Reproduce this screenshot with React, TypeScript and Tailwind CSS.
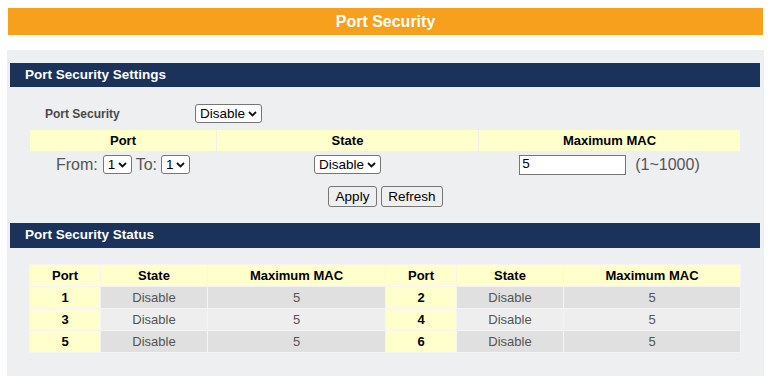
import React from "react";

const Chevron = () => (
  <svg
    className="pointer-events-none absolute right-[5px] top-1/2 -translate-y-1/2"
    width="9"
    height="6"
    viewBox="0 0 9 6"
  >
    <polyline points="1,1 4.5,4.5 8,1" fill="none" stroke="#111" strokeWidth="1.8" />
  </svg>
);

function Sel({ value, w }: { value: string; w: string }) {
  return (
    <span className={`relative inline-flex h-[19px] ${w}`}>
      <select
        defaultValue={value}
        className="h-full w-full appearance-none rounded-[3px] border border-[#767676] bg-white pl-[4px] text-[13.5px] leading-none text-black outline-none"
      >
        <option>{value}</option>
      </select>
      <Chevron />
    </span>
  );
}

const Btn = ({ label, w }: { label: string; w: string }) => (
  <button
    className={`h-[21px] ${w} rounded-[3px] border border-[#767676] bg-[#efefef] text-[13.5px] leading-none text-black`}
  >
    {label}
  </button>
);

const rows = [
  [1, 2],
  [3, 4],
  [5, 6],
];

export default function App() {
  return (
    <div
      className="min-h-[389px] w-[773px] bg-white pt-[8px]"
      style={{ fontFamily: '"Liberation Sans", Arial, sans-serif' }}
    >
      <div className="ml-[8px] flex h-[27px] w-[755px] items-center justify-center bg-[#f7a01d] text-[16px] font-bold text-white">
        Port Security
      </div>

      <div className="ml-[7px] mt-[15px] w-[757px] bg-[#eeeff1] pb-[23px] pt-[13px]">
        <div className="ml-[3px] flex h-[24px] w-[750px] items-center bg-[#1b325b] pl-[15px] text-[13.5px] font-bold text-white">
          Port Security Settings
        </div>

        <div className="mt-[17px] flex h-[19px] items-center">
          <span className="ml-[38px] w-[150px] text-[12px] font-bold text-[#4a4a4a]">Port Security</span>
          <Sel value="Disable" w="w-[67px]" />
        </div>

        <table className="ml-[22px] mt-[6px] w-[712px] border-separate border-spacing-px text-[13px]">
          <tbody>
            <tr className="h-[21px] bg-[#ffffcc] font-bold text-black">
              <td className="w-[186px] text-center">Port</td>
              <td className="w-[261px] text-center">State</td>
              <td className="text-center">Maximum MAC</td>
            </tr>
            <tr className="h-[25px]">
              <td className="text-center">
                <div className="flex items-center justify-center text-[16px] text-[#555]">
                  <span className="mr-[5px]">From:</span>
                  <Sel value="1" w="w-[29px]" />
                  <span className="ml-[4px] mr-[4px]">To:</span>
                  <Sel value="1" w="w-[29px]" />
                </div>
              </td>
              <td>
                <div className="flex justify-center">
                  <Sel value="Disable" w="w-[67px]" />
                </div>
              </td>
              <td>
                <div className="flex items-center justify-center">
                  <input
                    defaultValue="5"
                    className="h-[20px] w-[107px] border border-[#767676] bg-white px-[2px] text-[13.5px] text-black outline-none"
                  />
                  <span className="ml-[9px] text-[16px] text-[#555]">(1~1000)</span>
                </div>
              </td>
            </tr>
          </tbody>
        </table>

        <div className="mt-[8px] flex justify-center gap-[4px]">
          <Btn label="Apply" w="w-[49px]" />
          <Btn label="Refresh" w="w-[62px]" />
        </div>

        <div className="ml-[3px] mt-[16px] flex h-[25px] w-[750px] items-center bg-[#1b325b] pl-[15px] text-[13.5px] font-bold text-white">
          Port Security Status
        </div>

        <table className="ml-[22px] mt-[16px] w-[712px] border-separate border-spacing-px bg-[#f4f4f4] text-[13px]">
          <tbody>
            <tr className="h-[21px] bg-[#ffffcc] font-bold text-black">
              <td className="w-[70px] text-center">Port</td>
              <td className="w-[106px] text-center">State</td>
              <td className="w-[177px] text-center">Maximum MAC</td>
              <td className="w-[70px] text-center">Port</td>
              <td className="w-[106px] text-center">State</td>
              <td className="text-center">Maximum MAC</td>
            </tr>
            {rows.map((r, i) => {
              const g = i % 2 === 0 ? "bg-[#e0e0e0]" : "bg-[#eeeeee]";
              return (
                <tr key={i} className="h-[21px]">
                  {r.map((p) => (
                    <React.Fragment key={p}>
                      <td className="bg-[#ffffcc] text-center font-bold text-black">{p}</td>
                      <td className={`${g} text-center text-[#555]`}>Disable</td>
                      <td className={`${g} text-center text-[#555]`}>5</td>
                    </React.Fragment>
                  ))}
                </tr>
              );
            })}
          </tbody>
        </table>
      </div>
    </div>
  );
}
